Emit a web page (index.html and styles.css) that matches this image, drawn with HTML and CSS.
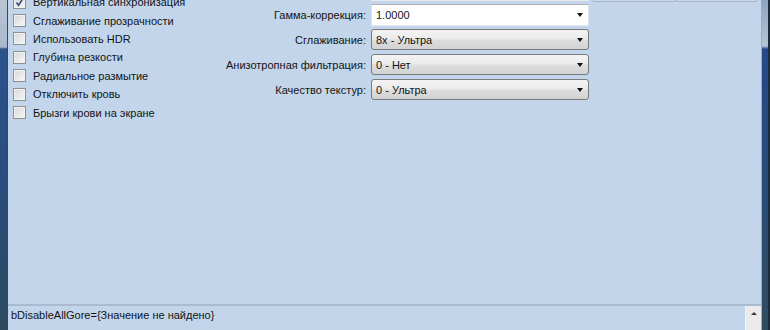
FILE: index.html
```html
<!DOCTYPE html>
<html lang="ru">
<head>
    <meta charset="UTF-8">
    <meta name="viewport" content="width=device-width, initial-scale=1.0">
    <title>Настройки</title>
    <link rel="stylesheet" href="styles.css">
</head>
<body>
    <div class="window">
        <div class="frame frame-left"></div>

        <div class="client">
            <div class="main">
                <div class="options">
                    <label class="check">
                        <span class="box">
                            <svg width="11" height="11" viewBox="0 0 11 11"><path d="M2.5 5.5 L4.6 8.3 L8.6 2" fill="none" stroke="#3a4f7a" stroke-width="1.6"/></svg>
                        </span>
                        Вертикальная синхронизация
                    </label>
                    <label class="check"><span class="box"></span>Сглаживание прозрачности</label>
                    <label class="check"><span class="box"></span>Использовать HDR</label>
                    <label class="check"><span class="box"></span>Глубина резкости</label>
                    <label class="check"><span class="box"></span>Радиальное размытие</label>
                    <label class="check"><span class="box"></span>Отключить кровь</label>
                    <label class="check"><span class="box"></span>Брызги крови на экране</label>
                </div>

                <div class="settings">
                    <div class="row">
                        <span class="label"></span>
                        <div class="combo combo-edit"><span class="value"></span><span class="arrow"></span></div>
                    </div>
                    <div class="row">
                        <span class="label">Гамма-коррекция:</span>
                        <div class="combo combo-edit"><span class="value">1.0000</span><span class="arrow"></span></div>
                    </div>
                    <div class="row">
                        <span class="label">Сглаживание:</span>
                        <div class="combo"><span class="value">8x - Ультра</span><span class="arrow"></span></div>
                    </div>
                    <div class="row">
                        <span class="label">Анизотропная фильтрация:</span>
                        <div class="combo"><span class="value">0 - Нет</span><span class="arrow"></span></div>
                    </div>
                    <div class="row">
                        <span class="label">Качество текстур:</span>
                        <div class="combo"><span class="value">0 - Ультра</span><span class="arrow"></span></div>
                    </div>
                </div>

                <div class="side">
                    <div class="side-box"></div>
                    <div class="side-box side-box-last"></div>
                </div>
            </div>

            <div class="status">
                <span class="status-text">bDisableAllGore={Значение не найдено}</span>
                <div class="scroll-btn"><span class="scroll-arrow"></span></div>
            </div>
        </div>

        <div class="frame frame-right"></div>
    </div>
</body>
</html>
```

FILE: styles.css
```css
* {
    margin: 0;
    padding: 0;
    box-sizing: border-box;
}

html, body {
    height: 100%;
    overflow: hidden;
}

body {
    font-family: "Liberation Sans", Arial, sans-serif;
    font-size: 11px;
    color: #141414;
    background-color: #c2d5eb;
}

.window {
    display: flex;
    height: 330px;
}

/* window border */
.frame {
    flex-shrink: 0;
    height: 100%;
}

.frame-left {
    width: 8px;
    border-right: 1px solid #38485c;
    background: linear-gradient(to bottom, #b8c5d4 0, #a9b9cc 47px, #2b528b 49px, #2a4d7e 55%, #2c4a5e 100%);
}

.frame-right {
    width: 9px;
    border-left: 1px solid #9badc2;
    border-right: 2px solid #1d2c3c;
    background: linear-gradient(to bottom, #8ea5c2 0, #b6c4d4 46px, #24488a 49px, #2a4b78 55%, #2e4c60 100%);
}

.client {
    flex: 1;
    display: flex;
    flex-direction: column;
    min-width: 0;
}

.main {
    flex: 1;
    display: flex;
    align-items: flex-start;
    overflow: hidden;
}

/* checkbox column */
.options {
    width: 192px;
    flex-shrink: 0;
    margin-top: -7px;
    padding-left: 5px;
}

.check {
    display: flex;
    align-items: center;
    height: 18.4px;
    white-space: nowrap;
}

.box {
    width: 13px;
    height: 13px;
    margin-right: 7px;
    flex-shrink: 0;
    display: flex;
    align-items: center;
    justify-content: center;
    border: 1px solid #8e8f8f;
    box-shadow: inset 0 0 0 1px #f2f2f2;
    background: linear-gradient(135deg, #d6d6d6, #f8f8f8);
}

/* label + combo rows */
.settings {
    width: 389px;
    flex-shrink: 0;
    margin-top: -21px;
    display: flex;
    flex-direction: column;
    gap: 4px;
}

.row {
    display: flex;
    align-items: center;
    gap: 5px;
    height: 21px;
}

.label {
    width: 166px;
    text-align: right;
    white-space: nowrap;
}

.combo {
    width: 218px;
    height: 21px;
    display: flex;
    align-items: center;
    justify-content: space-between;
    padding: 0 5px 0 4px;
    border: 1px solid #7a7a7a;
    border-radius: 3px;
    background: linear-gradient(to bottom, #f3f3f3 0%, #ebebeb 48%, #dedede 52%, #d2d2d2 100%);
}

.combo-edit {
    height: 22px;
    border-radius: 0;
    border-color: #abadb3 #dbdfe6 #e3e9ef #e2e3ea;
    background: #ffffff;
}

.arrow {
    width: 0;
    height: 0;
    border-left: 3px solid transparent;
    border-right: 3px solid transparent;
    border-top: 4px solid #111;
}

/* cut-off boxes on the right */
.side {
    display: flex;
    gap: 1px;
    margin-top: -18px;
    margin-left: 4px;
}

.side-box {
    width: 82px;
    height: 20px;
    border: 1px solid #a7b5c6;
    background: #cbd9ea;
}

.side-box-last {
    width: 81px;
}

/* status line */
.status {
    height: 26px;
    flex-shrink: 0;
    display: flex;
    justify-content: space-between;
    border-top: 2px solid #aabbd0;
}

.status-text {
    padding: 3px 0 0 3px;
    white-space: nowrap;
}

.scroll-btn {
    width: 16px;
    display: flex;
    justify-content: center;
    padding-top: 6px;
    background: #ebebeb;
    border-left: 1px solid #f4f4f4;
}

.scroll-arrow {
    width: 0;
    height: 0;
    border-left: 3px solid transparent;
    border-right: 3px solid transparent;
    border-bottom: 3px solid #3a3a3a;
}
```
